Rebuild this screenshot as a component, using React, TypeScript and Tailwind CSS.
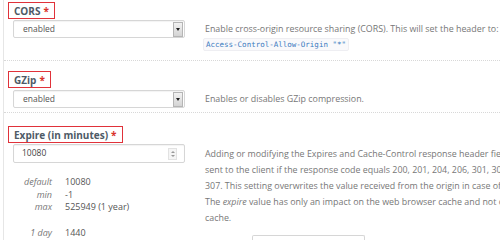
import React from "react";

const font = { fontFamily: '"Open Sans", "Liberation Sans", sans-serif' };

function Label({ text }: { text: string }) {
  return (
    <div className="ml-[4px] flex h-[17px] w-fit items-center border border-[#e0323a] px-[5px] text-[10px] font-bold leading-none text-[#4e5a66]">
      {text}
      <span className="ml-[3px] text-[#d9342c]">*</span>
    </div>
  );
}

function SelectBox({ value }: { value: string }) {
  return (
    <div className="flex h-[18px] w-[172px] items-center justify-between rounded-[2px] border border-[#d6d6d6] bg-white pl-[9px] pr-[1px] shadow-[inset_0_1px_1px_rgba(0,0,0,0.05)]">
      <span className="text-[8.5px] text-[#555]">{value}</span>
      <span className="flex h-[15px] w-[10px] items-center justify-center border border-[#b5b5b5] bg-gradient-to-b from-[#f2f2f2] to-[#d4d4d4]">
        <span className="h-0 w-0 border-x-[2.5px] border-t-[3px] border-x-transparent border-t-[#222]" />
      </span>
    </div>
  );
}

function NumberBox({ value }: { value: string }) {
  return (
    <div className="flex h-[19px] w-[172px] items-center justify-between rounded-[2px] border border-[#d6d6d6] bg-white pl-[8px] pr-[7px] shadow-[inset_0_1px_1px_rgba(0,0,0,0.05)]">
      <span className="text-[8.5px] text-[#444]">{value}</span>
      <span className="flex h-[12px] w-[9px] flex-col items-center justify-center gap-[2px] border border-[#e2e2e2] bg-[#f5f5f5]">
        <span className="h-0 w-0 border-x-[2px] border-b-[2px] border-x-transparent border-b-[#999]" />
        <span className="h-0 w-0 border-x-[2px] border-t-[2px] border-x-transparent border-t-[#999]" />
      </span>
    </div>
  );
}

const details: [string, string][] = [
  ["default", "10080"],
  ["min", "-1"],
  ["max", "525949 (1 year)"],
];

export default function App() {
  return (
    <div className="h-[240px] w-[500px] overflow-hidden bg-white" style={font}>
      <div className="ml-[3px] h-full border-l border-[#e6e6e6]">
        {/* CORS */}
        <div className="h-[61px] border-b border-dotted border-[#d8d8d8] pt-[2px]">
          <Label text="CORS" />
          <div className="mt-[1px] flex">
            <div className="w-[201px] shrink-0 pl-[9px]">
              <SelectBox value="enabled" />
            </div>
            <div className="whitespace-nowrap pt-[2px] text-[8.9px] leading-[14px] text-[#777]">
              <p>Enable cross-origin resource sharing (CORS). This will set the header to:</p>
              <code
                className="ml-[-2px] mt-[2px] inline-block rounded-[2px] border border-[#eeeef2] bg-[#f9f9fb] px-[2px] text-[7.5px] leading-[11px] text-[#3b7bbf]"
                style={{ fontFamily: '"DejaVu Sans Mono", "Liberation Mono", monospace' }}
              >
                Access-Control-Allow-Origin "*"
              </code>
            </div>
          </div>
        </div>

        {/* GZip */}
        <div className="h-[52px] border-b border-dotted border-[#d8d8d8] pt-[10px]">
          <Label text="GZip" />
          <div className="mt-[2px] flex items-center">
            <div className="w-[201px] shrink-0 pl-[9px]">
              <SelectBox value="enabled" />
            </div>
            <p className="whitespace-nowrap text-[8.9px] text-[#777]">Enables or disables GZip compression.</p>
          </div>
        </div>

        {/* Expire */}
        <div className="pt-[13px]">
          <Label text="Expire (in minutes)" />
          <div className="mt-[1px] flex">
            <div className="w-[201px] shrink-0 pl-[9px]">
              <NumberBox value="10080" />
              <div className="mt-[13px] text-[9px] leading-[12.5px] text-[#555]">
                {details.map(([k, v]) => (
                  <div key={k} className="flex">
                    <span className="w-[52px] pr-[13px] text-right italic text-[#777]">{k}</span>
                    <span>{v}</span>
                  </div>
                ))}
                <div className="mt-[13px] flex">
                  <span className="w-[52px] pr-[13px] text-right italic text-[#777]">1 day</span>
                  <span>1440</span>
                </div>
              </div>
            </div>
            <div className="whitespace-nowrap pt-[2px] text-[8.9px] leading-[16px] text-[#777]">
              <p>Adding or modifying the Expires and Cache-Control response header fields</p>
              <p>sent to the client if the response code equals 200, 201, 204, 206, 301, 302, 303, 304 or</p>
              <p>307. This setting overwrites the value received from the origin in case of a cache hit.</p>
              <p>
                The <em>expire</em> value has only an impact on the web browser cache and not on the CDN
              </p>
              <p>cache.</p>
              <div className="mt-[6px] flex items-center">
                <span className="w-[47px] pl-[20px] text-[#555]">-</span>
                <span className="h-[10px] w-[113px] rounded-t-[2px] border border-b-0 border-[#d6d6d6]" />
              </div>
            </div>
          </div>
        </div>
      </div>
    </div>
  );
}
